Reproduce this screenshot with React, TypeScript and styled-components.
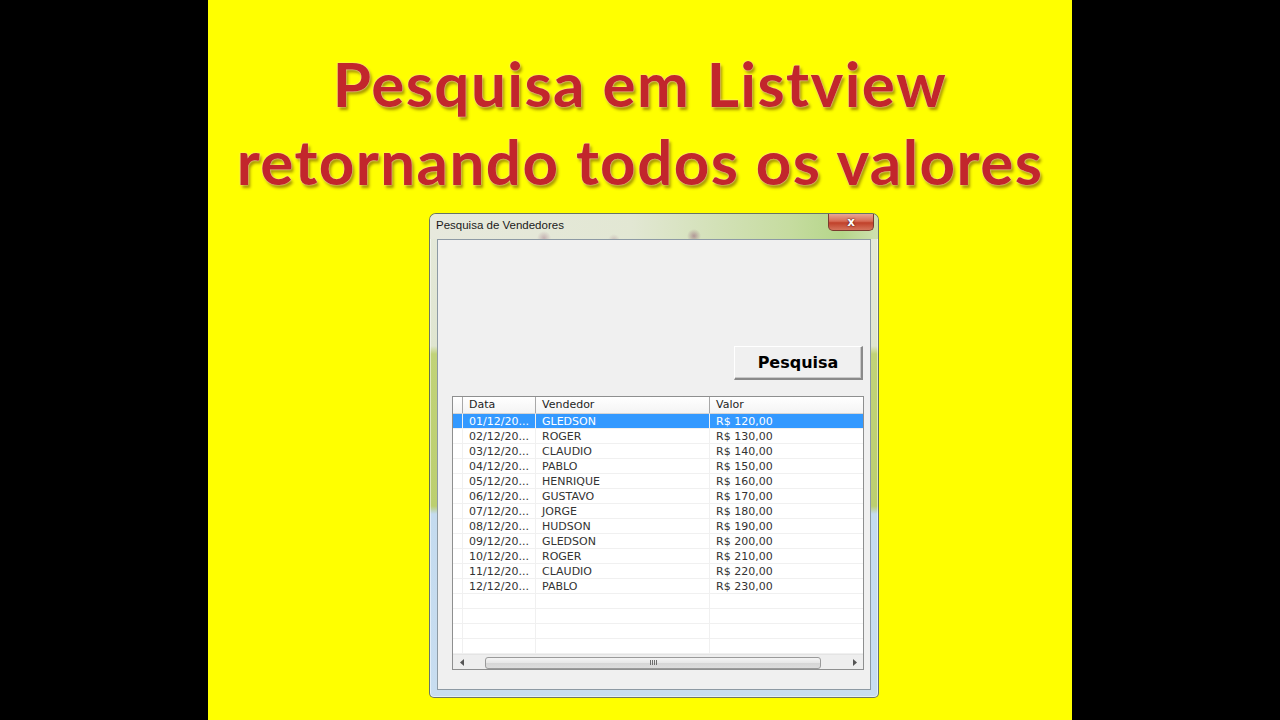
import React from 'react';
import styled, { createGlobalStyle } from 'styled-components';

const GlobalStyle = createGlobalStyle`
  html, body {
    margin: 0;
    padding: 0;
    background: #000;
  }
`;

const Stage = styled.div`
  width: 1280px;
  height: 720px;
  background: #000;
  display: flex;
  justify-content: center;
`;

const Slide = styled.section`
  width: 864px;
  height: 720px;
  background: #ffff00;
  display: flex;
  flex-direction: column;
  align-items: center;
`;

const Title = styled.h1`
  margin: 0;
  padding-top: 44px;
  font-family: Lato, 'Open Sans', sans-serif;
  font-weight: 700;
  font-size: 62px;
  letter-spacing: 1.4px;
  line-height: 78px;
  text-align: center;
  color: #c2262c;
  text-shadow: 0 0 1px #f6e7b5, 0 0 2px #f3dfa0, 2px 3px 3px rgba(60, 20, 0, 0.45);
  white-space: nowrap;
`;

const Line = styled.span`
  display: block;
`;

const Window = styled.div`
  margin-top: 13px;
  margin-left: 28px;
  width: 450px;
  height: 485px;
  box-sizing: border-box;
  border: 1px solid rgba(70, 80, 60, 0.75);
  border-radius: 7px 7px 5px 5px;
  background: linear-gradient(
    to bottom,
    #e5e9da 0,
    #dfe5d0 132px,
    #c1d378 140px,
    #bccf70 292px,
    #c4dbef 300px,
    #c8ddf0 100%
  );
  display: flex;
  flex-direction: column;
  box-shadow: inset 0 0 0 1px rgba(255, 255, 255, 0.5);
`;

const TitleBar = styled.div`
  height: 25px;
  display: flex;
  align-items: flex-start;
  justify-content: space-between;
  border-radius: 6px 6px 0 0;
  background:
    radial-gradient(circle at 114px 24px, rgba(140, 80, 110, 0.35), transparent 7px),
    radial-gradient(circle at 184px 26px, rgba(140, 80, 110, 0.25), transparent 6px),
    radial-gradient(circle at 264px 22px, rgba(130, 60, 100, 0.45), transparent 7px),
    linear-gradient(to right, #e7e9dd 0, #e2e7d3 45%, #c6dca0 80%, #b5d68a 92%, #cfe0b0 100%);
`;

const Caption = styled.span`
  padding: 5px 0 0 6px;
  font-family: 'Liberation Sans', Arial, sans-serif;
  font-size: 11.5px;
  color: #1a1a1a;
`;

const CloseButton = styled.div`
  width: 44px;
  height: 16px;
  margin-right: 4px;
  border: 1px solid #7b3a2e;
  border-top: none;
  border-radius: 0 0 5px 5px;
  background: linear-gradient(to bottom, #e9a595 0, #d66b55 45%, #c0412a 55%, #d5735b 100%);
  display: flex;
  align-items: center;
  justify-content: center;
  color: #fff;
  font-family: 'DejaVu Sans', sans-serif;
  font-weight: 700;
  font-size: 12px;
  line-height: 1;
  text-shadow: 0 0 2px #5a1a10, 0 0 1px #5a1a10;
`;

const Client = styled.div`
  flex: 1;
  margin: 0 7px 7px 7px;
  border: 1px solid #8d9aa4;
  background: #f0f0f0;
  display: flex;
  flex-direction: column;
`;

const ButtonRow = styled.div`
  display: flex;
  justify-content: flex-end;
  padding: 106px 7px 0 0;
`;

const PushButton = styled.button`
  width: 129px;
  height: 34px;
  box-sizing: border-box;
  background: #f0f0f0;
  border: 1px solid #fff;
  border-right: 2px solid #8a8a8a;
  border-bottom: 2px solid #8a8a8a;
  box-shadow: inset -1px -1px 0 #c8c8c8;
  font-family: 'DejaVu Sans', Verdana, sans-serif;
  font-weight: 700;
  font-size: 16px;
  color: #000;
  padding: 0;
`;

const ListView = styled.div`
  margin: 16px 6px 0 14px;
  height: 274px;
  box-sizing: border-box;
  border: 1px solid #8e8f8f;
  background: #fff;
  display: flex;
  flex-direction: column;
  overflow: hidden;
`;

const COLS = '10px 73px 174px 1fr';

const HeaderRow = styled.div`
  display: grid;
  grid-template-columns: ${COLS};
  height: 17px;
  box-sizing: border-box;
  border-bottom: 1px solid #d5d5d5;
  background: linear-gradient(to bottom, #ffffff, #f4f4f4);
`;

const HeaderCell = styled.div`
  border-right: 1px solid #a8a8a8;
  padding-left: 6px;
  font-family: 'DejaVu Sans', Tahoma, sans-serif;
  font-size: 11px;
  line-height: 16px;
  color: #1e1e1e;
  &:last-child {
    border-right: none;
  }
`;

const Body = styled.div`
  flex: 1;
  display: flex;
  flex-direction: column;
`;

const Row = styled.div<{ $selected?: boolean }>`
  display: grid;
  grid-template-columns: ${COLS};
  height: 15px;
  box-sizing: border-box;
  border-bottom: 1px solid #f0f0f0;
  background: ${(p) => (p.$selected ? '#3399ff' : 'transparent')};
  color: ${(p) => (p.$selected ? '#fff' : '#333')};
`;

const Cell = styled.div`
  border-right: 1px solid #f0f0f0;
  padding-left: 6px;
  font-family: 'DejaVu Sans', Tahoma, sans-serif;
  font-size: 11px;
  line-height: 15px;
  white-space: nowrap;
  overflow: hidden;
  &:last-child {
    border-right: none;
  }
`;

const ScrollBar = styled.div`
  height: 15px;
  display: flex;
  align-items: center;
  background: #eeeeee;
  border-top: 1px solid #e4e4e4;
`;

const Arrow = styled.div`
  width: 17px;
  display: flex;
  justify-content: center;
  align-items: center;
`;

const Track = styled.div`
  flex: 1;
  height: 15px;
  display: flex;
  align-items: center;
  padding: 0 25px 0 15px;
`;

const Thumb = styled.div`
  flex: 1;
  height: 12px;
  box-sizing: border-box;
  border: 1px solid #9a9a9a;
  border-radius: 3px;
  background: linear-gradient(to bottom, #f4f4f4 0, #e6e6e6 50%, #d6d6d6 51%, #dcdcdc 100%);
  display: flex;
  align-items: center;
  justify-content: center;
  gap: 1px;
`;

const Grip = styled.span`
  width: 1px;
  height: 5px;
  background: #6e6e6e;
`;

const rows = [
  ['01/12/20...', 'GLEDSON', 'R$ 120,00'],
  ['02/12/20...', 'ROGER', 'R$ 130,00'],
  ['03/12/20...', 'CLAUDIO', 'R$ 140,00'],
  ['04/12/20...', 'PABLO', 'R$ 150,00'],
  ['05/12/20...', 'HENRIQUE', 'R$ 160,00'],
  ['06/12/20...', 'GUSTAVO', 'R$ 170,00'],
  ['07/12/20...', 'JORGE', 'R$ 180,00'],
  ['08/12/20...', 'HUDSON', 'R$ 190,00'],
  ['09/12/20...', 'GLEDSON', 'R$ 200,00'],
  ['10/12/20...', 'ROGER', 'R$ 210,00'],
  ['11/12/20...', 'CLAUDIO', 'R$ 220,00'],
  ['12/12/20...', 'PABLO', 'R$ 230,00'],
  ['', '', ''],
  ['', '', ''],
  ['', '', ''],
  ['', '', ''],
];

const App = () => {
  return (
    <Stage>
      <GlobalStyle />
      <Slide>
        <Title>
          <Line>Pesquisa em Listview</Line>
          <Line>retornando todos os valores</Line>
        </Title>
        <Window>
          <TitleBar>
            <Caption>Pesquisa de Vendedores</Caption>
            <CloseButton>x</CloseButton>
          </TitleBar>
          <Client>
            <ButtonRow>
              <PushButton>Pesquisa</PushButton>
            </ButtonRow>
            <ListView>
              <HeaderRow>
                <HeaderCell />
                <HeaderCell>Data</HeaderCell>
                <HeaderCell>Vendedor</HeaderCell>
                <HeaderCell>Valor</HeaderCell>
              </HeaderRow>
              <Body>
                {rows.map((r, i) => (
                  <Row key={i} $selected={i === 0}>
                    <Cell />
                    <Cell>{r[0]}</Cell>
                    <Cell>{r[1]}</Cell>
                    <Cell>{r[2]}</Cell>
                  </Row>
                ))}
              </Body>
              <ScrollBar>
                <Arrow>
                  <svg width="4" height="7" viewBox="0 0 4 7">
                    <path d="M4 0 L0 3.5 L4 7 Z" fill="#555" />
                  </svg>
                </Arrow>
                <Track>
                  <Thumb>
                    <Grip />
                    <Grip />
                    <Grip />
                    <Grip />
                  </Thumb>
                </Track>
                <Arrow>
                  <svg width="4" height="7" viewBox="0 0 4 7">
                    <path d="M0 0 L4 3.5 L0 7 Z" fill="#555" />
                  </svg>
                </Arrow>
              </ScrollBar>
            </ListView>
          </Client>
        </Window>
      </Slide>
    </Stage>
  );
};

export default App;
